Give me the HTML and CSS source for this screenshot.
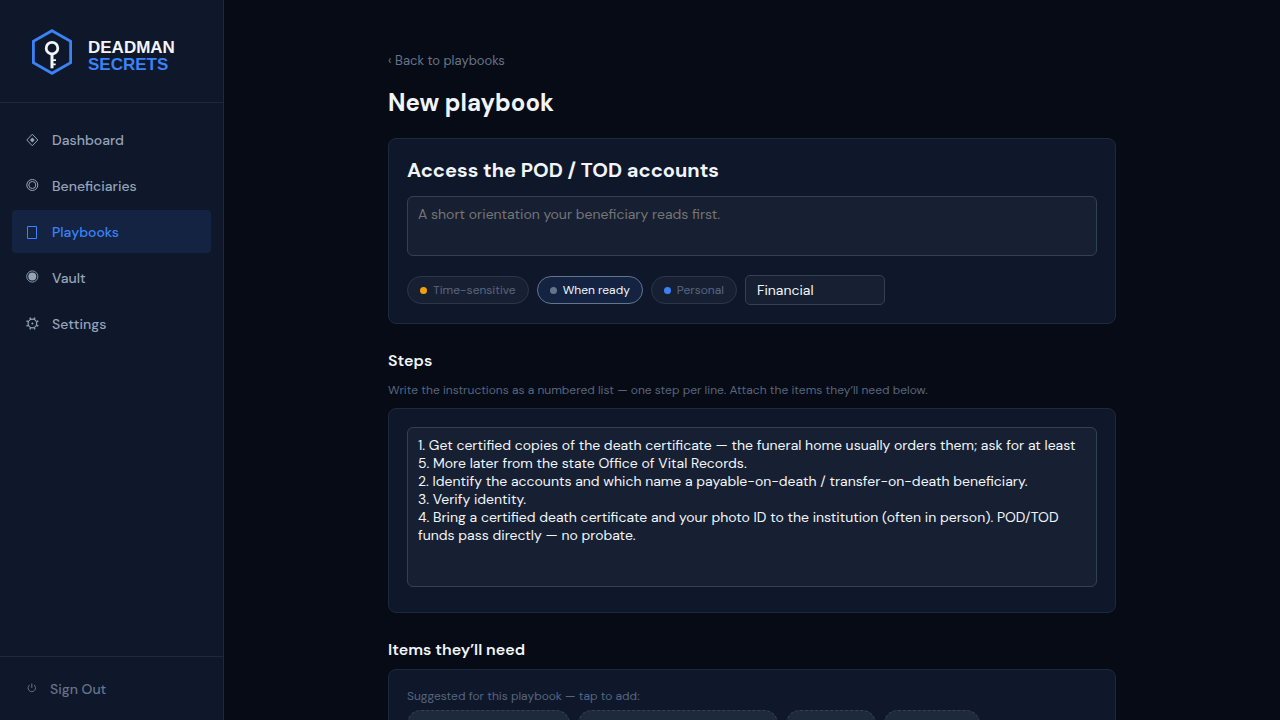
FILE: index.html
```html
<!DOCTYPE html>
<html lang="en">
<head>
    <meta charset="UTF-8">
    <meta name="viewport" content="width=device-width, initial-scale=1.0">
    <title>New playbook - Deadman Secrets</title>
    <link rel="stylesheet" href="styles.css">
</head>
<body>
    <div class="layout">
        <aside class="sidebar">
            <a class="logo" href="#" aria-label="Deadman Secrets">
                <svg class="logo-image" width="168" height="48" viewBox="0 0 168 48" fill="none">
                    <path d="M24 2.700 L42.600 13.300 V34.700 L24 45.300 L5.400 34.700 V13.300 Z" stroke="#3b82f6" stroke-width="2.8"/>
                    <circle cx="24" cy="20.200" r="5.800" stroke="#f1f5f9" stroke-width="2.8"/>
                    <path d="M24 26 V40.300" stroke="#f1f5f9" stroke-width="3"/>
                    <path d="M25 32.200 H28 M25 36.300 H27.700" stroke="#f1f5f9" stroke-width="1.8"/>
                    <text class="logo-text" x="60" y="25">DEADMAN</text>
                    <text class="logo-text accent" x="60" y="42">SECRETS</text>
                </svg>
            </a>

            <nav class="nav">
                <a class="nav-link" href="#">
                    <svg class="nav-icon" viewBox="0 0 16 16" fill="none" stroke="currentColor" aria-hidden="true"><path d="M8.300 2.200 L13.800 8 L8.300 13.800 L2.800 8 Z"/><path d="M8.300 5.600 L10.700 8 L8.300 10.400 L5.900 8 Z" fill="currentColor" stroke="none"/></svg>
                    Dashboard
                </a>
                <a class="nav-link" href="#">
                    <svg class="nav-icon" viewBox="0 0 16 16" fill="none" stroke="currentColor" aria-hidden="true"><circle cx="8.300" cy="7" r="5.500"/><circle cx="8.300" cy="7" r="3.500"/></svg>
                    Beneficiaries
                </a>
                <a class="nav-link active" href="#">
                    <svg class="nav-icon" viewBox="0 0 16 16" fill="none" stroke="currentColor" aria-hidden="true"><path d="M3.500 2.500 H12.500 V14.500 H3.500 Z"/></svg>
                    Playbooks
                </a>
                <a class="nav-link" href="#">
                    <svg class="nav-icon" viewBox="0 0 16 16" fill="none" stroke="currentColor" aria-hidden="true"><circle cx="8.300" cy="6.500" r="5.600" stroke-width=".9"/><circle cx="8.300" cy="6.500" r="4" fill="currentColor" stroke="none"/></svg>
                    Vault
                </a>
                <a class="nav-link" href="#">
                    <svg class="nav-icon" viewBox="0 0 16 16" fill="none" stroke="currentColor" aria-hidden="true">
                        <circle cx="8.400" cy="7.500" r="4.300" stroke-width="1.2"/>
                        <circle cx="8.400" cy="7.500" r="1" fill="currentColor" stroke="none"/>
                        <path stroke-width="1.6" d="M13 5.600 L14.300 5.100 M10.300 2.900 L10.800 1.600 M6.500 2.900 L6 1.600 M3.800 5.600 L2.500 5.100 M3.800 9.400 L2.500 9.900 M6.500 12.100 L6 13.400 M10.300 12.100 L10.800 13.400 M13 9.400 L14.300 9.900"/>
                    </svg>
                    Settings
                </a>
            </nav>

            <div class="sidebar-footer">
                <button type="button" class="sign-out">
                    <svg class="nav-icon" viewBox="0 0 16 16" fill="none" stroke="currentColor" aria-hidden="true"><path d="M5.600 4 A3.700 3.700 0 1 0 10 4 M7.800 2.500 V7"/></svg>
                    Sign Out
                </button>
            </div>
        </aside>

        <main class="main">
            <div class="content">
                <a class="back" href="#">‹ Back to playbooks</a>
                <h1>New playbook</h1>

                <section class="card">
                    <input class="title-input" type="text" aria-label="Playbook title" value="Access the POD / TOD accounts">
                    <textarea class="field intro" aria-label="Orientation" placeholder="A short orientation your beneficiary reads first."></textarea>
                    <div class="meta">
                        <button type="button" class="chip"><span class="dot amber"></span>Time-sensitive</button>
                        <button type="button" class="chip selected"><span class="dot gray"></span>When ready</button>
                        <button type="button" class="chip"><span class="dot blue"></span>Personal</button>
                        <input class="category" type="text" aria-label="Category" value="Financial">
                    </div>
                </section>

                <h2>Steps</h2>
                <p class="hint">Write the instructions as a numbered list — one step per line. Attach the items they’ll need below.</p>
                <section class="card">
                    <textarea class="field steps" aria-label="Steps">1. Get certified copies of the death certificate — the funeral home usually orders them; ask for at least 5. More later from the state Office of Vital Records.
2. Identify the accounts and which name a payable-on-death / transfer-on-death beneficiary.
3. Verify identity.
4. Bring a certified death certificate and your photo ID to the institution (often in person). POD/TOD funds pass directly — no probate.</textarea>
                </section>

                <h2>Items they’ll need</h2>
                <section class="card">
                    <p class="suggest-label">Suggested for this playbook — tap to add:</p>
                    <div class="suggestions">
                        <button type="button" class="suggestion">+ Primary wallet account</button>
                        <button type="button" class="suggestion">+ Death certificate copy details</button>
                        <button type="button" class="suggestion">+ Insurance</button>
                        <button type="button" class="suggestion">+ Photo card</button>
                    </div>
                </section>
            </div>
        </main>
    </div>
</body>
</html>
```
FILE: styles.css
```css
* {
    box-sizing: border-box;
}

body {
    margin: 0;
    height: 100vh;
    overflow: hidden;
    font-family: "DM Sans", "Open Sans", sans-serif;
    font-size: 14px;
    color: #f1f5f9;
    background: #070b15;
}

a {
    text-decoration: none;
}

button,
input,
textarea {
    font-family: inherit;
}

.layout {
    display: flex;
    height: 100vh;
}

/* Sidebar */
.sidebar {
    display: flex;
    flex-direction: column;
    flex: 0 0 224px;
    background: #0f172a;
    border-right: 1px solid #1e293b;
}

.logo {
    display: block;
    padding: 28px 27px 26px 28px;
    border-bottom: 1px solid #1e293b;
}

.logo-image {
    display: block;
}

.logo-text {
    font-family: "Liberation Sans", Arial, sans-serif;
    font-size: 17px;
    font-weight: 700;
    fill: #f1f5f9;
}

.logo-text.accent {
    fill: #3b82f6;
}

.nav {
    flex: 1;
    display: flex;
    flex-direction: column;
    gap: 3px;
    padding: 15px 12px;
}

.nav-link {
    display: flex;
    align-items: center;
    gap: 12px;
    height: 43px;
    padding: 0 12px;
    border-radius: 4px;
    font-weight: 500;
    color: #94a3b8;
}

.nav-link.active {
    color: #3b82f6;
    background: #152342;
}

.nav-icon {
    width: 16px;
    height: 16px;
}

.sidebar-footer {
    padding: 12px;
    border-top: 1px solid #1e293b;
}

.sign-out {
    display: flex;
    align-items: center;
    gap: 10px;
    width: 100%;
    height: 39px;
    padding: 0 12px;
    border: 0;
    background: none;
    font-size: 14px;
    font-weight: 500;
    color: #64748b;
}

/* Editor */
.main {
    flex: 1;
    overflow: hidden;
    padding: 52px 32px;
}

.content {
    max-width: 728px;
    margin: 0 auto;
}

.back {
    display: block;
    font-size: 13px;
    line-height: 18px;
    color: #64748b;
}

h1 {
    margin: 17px 0 19px;
    font-size: 24px;
    font-weight: 700;
    line-height: 32px;
}

h2 {
    margin: 25px 0 7px;
    font-size: 16px;
    font-weight: 600;
    line-height: 24px;
}

.card {
    padding: 18px;
    background: #0f172a;
    border: 1px solid #1e293b;
    border-radius: 8px;
}

.title-input {
    display: block;
    width: 100%;
    height: 26px;
    margin-bottom: 13px;
    padding: 0;
    border: 0;
    background: none;
    font-size: 20px;
    font-weight: 700;
    color: #f1f5f9;
}

.field {
    display: block;
    width: 100%;
    margin-bottom: 7px;
    padding: 8px 10px;
    border: 1px solid #334155;
    border-radius: 6px;
    background: #172033;
    font-size: 14px;
    line-height: 18px;
    color: #f1f5f9;
    resize: none;
}

.intro {
    height: 60px;
}

.steps {
    height: 160px;
}

.meta {
    display: flex;
    align-items: center;
    gap: 8px;
    margin-top: 19px;
}

.chip {
    display: flex;
    align-items: center;
    gap: 6px;
    height: 28px;
    padding: 0 12px;
    border: 1px solid #2a374a;
    border-radius: 14px;
    background: #172033;
    font-size: 12px;
    color: #57667f;
}

.chip.selected {
    border-color: #64748b;
    background: #152342;
    color: #f1f5f9;
}

.dot {
    width: 7px;
    height: 7px;
    border-radius: 50%;
}

.amber {
    background: #f59e0b;
}

.gray {
    background: #64748b;
}

.blue {
    background: #3b82f6;
}

.category {
    width: 140px;
    height: 30px;
    padding: 0 11px;
    border: 1px solid #334155;
    border-radius: 5px;
    background: #172033;
    font-size: 14px;
    color: #f1f5f9;
}

.hint {
    margin: 0 0 8px;
    font-size: 12px;
    line-height: 20px;
    color: #57667f;
}

.suggest-label {
    margin: 0 0 6px;
    font-size: 12px;
    line-height: 16px;
    color: #57667f;
}

.suggestions {
    display: flex;
    gap: 8px;
}

.suggestion {
    height: 28px;
    padding: 0 12px;
    border: 1px dashed #334155;
    border-radius: 14px;
    background: #1e293b;
    font-size: 12px;
    color: #94a3b8;
}
```
